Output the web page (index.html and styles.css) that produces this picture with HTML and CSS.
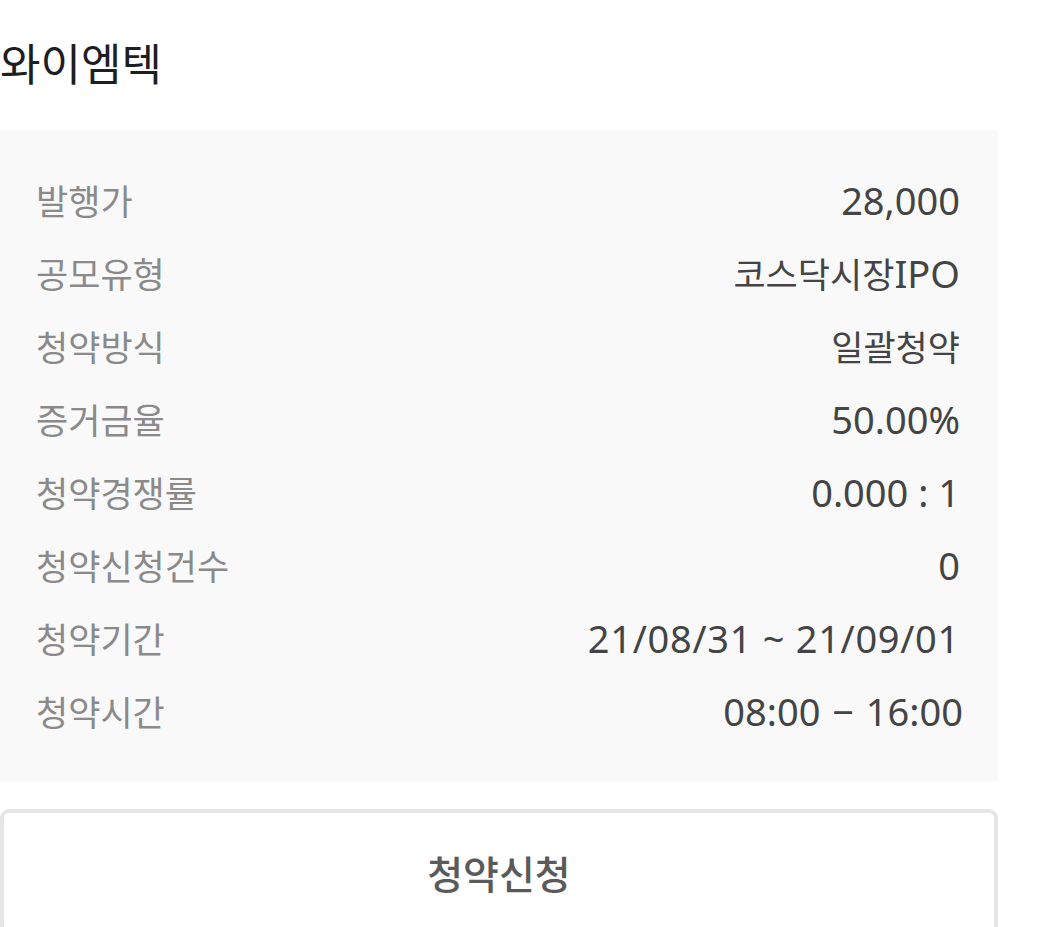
FILE: index.html
```html
<!DOCTYPE html>
<html lang="ko">
<head>
<meta charset="utf-8">
<link rel="stylesheet" href="styles.css">
</head>
<body>
<div class="page">
  <h1 class="title">와이엠텍</h1>
  <div class="info">
    <div class="row"><span class="label">발행가</span><span class="value">28,000</span></div>
    <div class="row"><span class="label">공모유형</span><span class="value"><span class="ko">코스닥시장</span>IPO</span></div>
    <div class="row"><span class="label">청약방식</span><span class="value"><span class="ko">일괄청약</span></span></div>
    <div class="row"><span class="label">증거금율</span><span class="value">50.00%</span></div>
    <div class="row"><span class="label">청약경쟁률</span><span class="value">0.000 : 1</span></div>
    <div class="row"><span class="label">청약신청건수</span><span class="value">0</span></div>
    <div class="row"><span class="label">청약기간</span><span class="value wide">21/08/31 ~ 21/09/01</span></div>
    <div class="row"><span class="label">청약시간</span><span class="value time">08:00 − 16:00</span></div>
  </div>
  <button class="apply">청약신청</button>
</div>
</body>
</html>
```

FILE: styles.css
```css
html, body {
  margin: 0;
  padding: 0;
  background: #ffffff;
}
body {
  font-family: "Noto Sans", "Noto Sans CJK KR", sans-serif;
  overflow: hidden;
}
.page {
  width: 998px;
  display: flex;
  flex-direction: column;
}
.title {
  margin: 0;
  height: 130px;
  line-height: 128px;
  font-size: 44px;
  font-weight: 400;
  color: #1e1e1e;
  box-sizing: border-box;
}
.info {
  background: #f9f9f9;
  padding: 33px 38px 34px 36px;
  display: flex;
  flex-direction: column;
}
.row {
  height: 73px;
  display: flex;
  justify-content: space-between;
  align-items: center;
}
.label {
  font-size: 35px;
  color: #8a8a8a;
}
.value {
  font-size: 38px;
  color: #444444;
}
.value .ko {
  font-size: 35px;
}
.wide {
  letter-spacing: 0.7px;
}
.time {
  margin-right: -3px;
  word-spacing: 2px;
}
.apply {
  margin-top: 28px;
  height: 126px;
  background: #ffffff;
  border: 4px solid #e6e6e6;
  border-radius: 9px;
  font-family: "Noto Sans", "Noto Sans CJK KR", sans-serif;
  font-size: 39px;
  font-weight: 500;
  color: #5a5a5a;
  padding: 0;
}
```
